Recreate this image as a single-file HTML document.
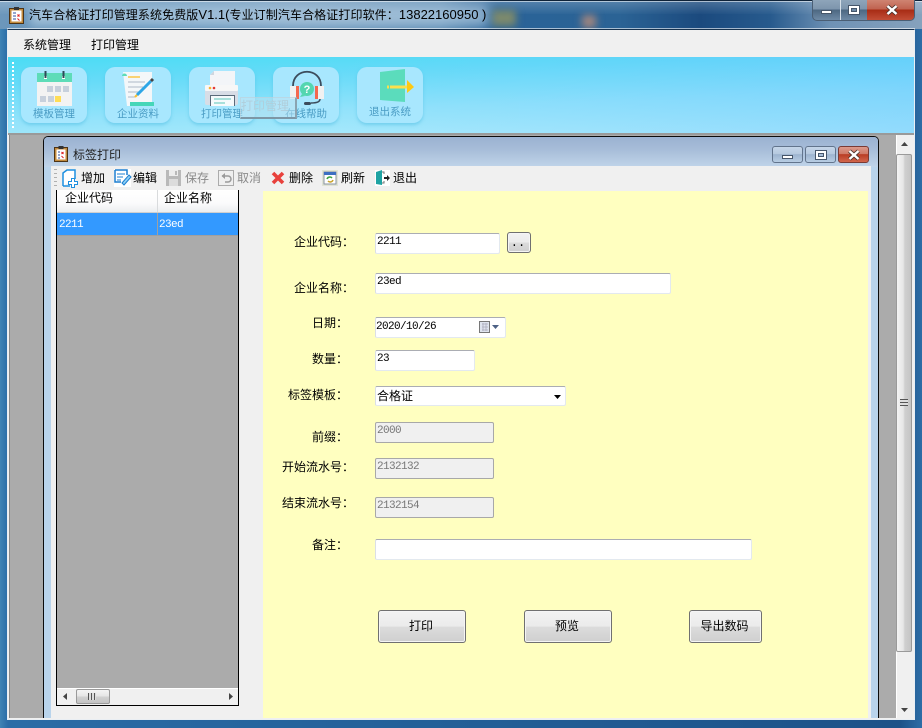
<!DOCTYPE html>
<html lang="zh"><head><meta charset="utf-8"><title>标签打印</title>
<style>
html,body{margin:0;padding:0;width:922px;height:728px;overflow:hidden;background:#1d5288}
*{box-sizing:border-box}
body{position:relative;font:12px "Liberation Sans","Noto Sans CJK SC",sans-serif;color:#000}
.a,.t,.i,.b{position:absolute}
.t{white-space:nowrap;line-height:16px;height:16px}
.m{font-family:"Liberation Mono",monospace;font-size:11px;letter-spacing:-.6px}
.i{background:#fff;border:1px solid #e3e9ef;border-top-color:#abadb3;border-left-color:#dbdfe6;border-radius:2px;font:11px/16px "Liberation Mono",monospace;letter-spacing:-.6px;padding:0 0 0 1px;color:#000}
.d{background:#f0f0f0;border:1px solid #a8a8a8;color:#777}
.b{background:linear-gradient(#f2f2f2 0,#ebebeb 50%,#dcdcdc 51%,#cfcfcf 100%);border:1px solid #707070;border-radius:3px;box-shadow:inset 0 0 0 1px #f5f5f5;text-align:center;font-size:12px;line-height:31px;padding-right:2px}
.card{position:absolute;top:67px;width:66px;height:56px;border-radius:10px;background:#a8e7fe;box-shadow:0 2px 3px rgba(80,190,225,.55)}
.cl{position:absolute;top:107px;width:66px;text-align:center;color:#4a9cc4;font-size:10.500px;line-height:14px;white-space:nowrap}
svg{position:absolute;overflow:visible}
.l{font-size:13px}
</style></head><body>
<!-- outer frame -->
<div class="a" style="left:0;top:0;width:922px;height:728px;background:linear-gradient(90deg,#3f83b5 0,#2a6ca6 8px,#1d5288 900px,#2d6da6 922px)"></div>
<!-- title glass -->
<div class="a" style="left:0;top:0;width:922px;height:29px;border-top:1px solid #0e2238;background:linear-gradient(90deg,#6c97bb 0,#5d8fb8 130px,#6d97bb 300px,#5c8bb3 440px,#2a6398 500px,#2b6395 620px,#1b4a7e 700px,#275a8d 770px,#6f92b5 830px,#86a2bd 922px)"></div>
<div class="a" style="left:0;top:1px;width:922px;height:13px;background:linear-gradient(rgba(255,255,255,.2),rgba(255,255,255,.02))"></div>
<div class="a" style="left:492px;top:10px;width:24px;height:16px;background:#7d8a6c;filter:blur(4px)"></div>
<div class="a" style="left:582px;top:15px;width:14px;height:13px;background:#a0857f;filter:blur(4px)"></div>
<div class="a" style="left:30px;top:6px;width:458px;height:20px;background:rgba(205,225,240,.55);filter:blur(5px)"></div>
<div class="a" style="left:0;top:1px;width:922px;height:1px;background:rgba(255,255,255,.55)"></div>
<div class="a" style="left:7px;top:28px;width:908px;height:1px;background:rgba(255,255,255,.6)"></div>
<!-- app icon -->
<svg style="left:9px;top:7px" width="15" height="17" viewBox="0 0 15 17"><rect x=".5" y="1.500" width="14" height="15" fill="#c28a3c" stroke="#4d3416"/><rect x="2.500" y="3.500" width="10" height="11" fill="#fff"/><rect x="5" y="0" width="5" height="3" fill="#333"/><path d="M4 6h3M4 9h3M4 12h3" stroke="#2c4f9e"/><path d="M8.500 7.500l2 2M10.500 7.500l-2 2M8.500 11.500l2 2" stroke="#d22"/></svg>
<div class="t" style="left:29px;top:7px;color:#000;letter-spacing:.1px">汽车合格证打印管理系统免费版<span class="l" style="letter-spacing:0">V1.1(</span>专业订制汽车合格证打印软件：<span class="l" style="letter-spacing:0">13822160950 )</span></div>
<!-- main window buttons -->
<div class="a" style="left:812px;top:0;width:103px;height:21px;border:1px solid #4a5e74;border-top:0;border-radius:0 0 5px 5px;overflow:hidden;background:linear-gradient(#8ea5ba 0,#7d95ad 45%,#4d6882 50%,#6e8aa6 100%)">
  <div class="a" style="left:27px;top:0;width:1px;height:20px;background:#d5dfe8"></div>
  <div class="a" style="left:54px;top:0;width:47px;height:20px;background:linear-gradient(#cf8472 0,#c06350 45%,#a82c15 50%,#c24e37 100%)"></div>
  <div class="a" style="left:8px;top:10px;width:11px;height:4px;background:#fff;border:1px solid #46566a"></div>
  <div class="a" style="left:35px;top:5px;width:12px;height:10px;background:#fff;border:1px solid #46566a"></div>
  <div class="a" style="left:38px;top:8px;width:6px;height:4px;background:#6e8aa6;border:1px solid #46566a"></div>
  <svg style="left:73px;top:5px" width="12" height="10" viewBox="0 0 12 10"><path d="M1.500 1l9 8M10.500 1l-9 8" stroke="#46302a" stroke-width="4"/><path d="M1.500 1l9 8M10.500 1l-9 8" stroke="#fff" stroke-width="2.400"/></svg>
</div>
<!-- client -->
<div class="a" style="left:7px;top:29px;width:908px;height:691px;background:#f0f0f0;border:1px solid #e9eef3;border-top:1px solid #17324e"></div>
<!-- menu -->
<div class="t" style="left:23px;top:37px">系统管理</div>
<div class="t" style="left:91px;top:37px">打印管理</div>
<!-- banner -->
<div class="a" style="left:8px;top:57px;width:906px;height:78px;border-bottom:2px solid #9a9a9a;background:linear-gradient(90deg,rgba(90,190,255,0) 0,rgba(90,190,255,0) 35%,rgba(90,190,255,.38) 100%),linear-gradient(178deg,#4adcf4 0,#66dbf8 25%,#93e3fb 60%,#b5edfc 100%)"></div>
<div class="a" style="left:12px;top:62px;width:2px;height:66px;border-left:2px dotted #fff"></div>
<div class="card" style="left:21px"></div><div class="card" style="left:105px"></div><div class="card" style="left:189px"></div><div class="card" style="left:273px"></div><div class="card" style="left:357px"></div>
<!-- calendar -->
<svg style="left:37px;top:71px" width="35" height="35" viewBox="0 0 35 35"><rect y="11" width="35" height="24" fill="#f3f3f3"/><rect y="2" width="35" height="9" fill="#5edcb8"/><rect x="7" y="5" width="3" height="3" fill="#fff"/><rect x="25" y="5" width="3" height="3" fill="#fff"/><rect x="7.500" y="0" width="2" height="7" fill="#2f4858"/><rect x="25.500" y="0" width="2" height="7" fill="#2f4858"/><g fill="#c7d0dc"><rect x="10" y="15" width="6" height="6"/><rect x="18" y="15" width="6" height="6"/><rect x="26" y="15" width="6" height="6"/><rect x="3" y="25" width="6" height="6"/><rect x="11" y="25" width="6" height="6"/></g><rect x="18" y="25" width="6" height="6" fill="#ffdd57"/></svg>
<!-- document -->
<svg style="left:120px;top:71px" width="36" height="35" viewBox="0 0 36 35"><path d="M3 1h29v34H7z" fill="#f4f7f9"/><path d="M2 5a2.500 2.500 0 1 1 5 0z" fill="#5edcb8"/><rect x="10" y="31" width="24" height="4" fill="#45d6b8"/><path d="M8 6h12" stroke="#fcc33c" stroke-width="1.400"/><path d="M8 11h17M8 16h15M8 21h12M8 26h7" stroke="#bcc6d2" stroke-width="1.300"/><path d="M17 24L31 10" stroke="#2ea6e6" stroke-width="3"/><path d="M31 10l2-2" stroke="#444" stroke-width="3"/><path d="M17 24l-2 2" stroke="#fbc02d" stroke-width="2"/></svg>
<!-- printer -->
<svg style="left:205px;top:71px" width="35" height="36" viewBox="0 0 35 36"><path d="M9 0h21v14H5V4z" fill="#f3f5f8"/><path d="M5 4h4V0z" fill="#cfd6df"/><rect y="14" width="33" height="20" rx="2" fill="#d8dde6"/><rect y="14" width="33" height="6" rx="1" fill="#f7f7f7"/><circle cx="5" cy="17" r="1.300" fill="#f9b233"/><circle cx="9" cy="17" r="1.300" fill="#e53935"/><rect x="5" y="24" width="25" height="11" fill="#5b6b7b"/><rect x="6" y="25" width="23" height="10" fill="#f5fafc"/><path d="M9 28h17" stroke="#8fd8d0" stroke-width="1.500"/><path d="M9 32h11" stroke="#8fd8d0" stroke-width="1.500"/></svg>
<!-- headset -->
<svg style="left:289px;top:71px" width="36" height="35" viewBox="0 0 36 35"><path d="M4 15C4 -4 32 -4 32 15" fill="none" stroke="#3c4c5c" stroke-width="1.800"/><rect x="1" y="15" width="7" height="13" fill="#f1f1f1"/><rect x="28" y="15" width="7" height="13" fill="#f1f1f1"/><rect x="7" y="15" width="3" height="13" fill="#f4684f"/><rect x="26" y="15" width="3" height="13" fill="#f4684f"/><circle cx="18" cy="18" r="7" fill="#54d6b0"/><path d="M13 23l-2 3 5-1z" fill="#54d6b0"/><text x="18" y="22" font-size="11" font-weight="bold" text-anchor="middle" fill="#fff" font-family="Liberation Sans">?</text><path d="M31 28c0 3-4 4-9 4" fill="none" stroke="#3c4c5c" stroke-width="1.500"/><rect x="15" y="31" width="7" height="3" rx="1.500" fill="#3c4c5c"/></svg>
<!-- exit -->
<svg style="left:380px;top:69px" width="35" height="36" viewBox="0 0 35 36"><path d="M0 3L25 0v33L0 31z" fill="#5bdcbc"/><path d="M7 18h21" stroke="#fbe04a" stroke-width="3" stroke-dasharray="2 1 22 0"/><path d="M27 11l7 7-7 6z" fill="#fdc913"/></svg>
<div class="cl" style="left:21px">模板管理</div>
<div class="cl" style="left:105px">企业资料</div>
<div class="cl" style="left:189px">打印管理</div>
<div class="cl" style="left:273px">在线帮助</div>
<div class="cl" style="left:357px;top:105px">退出系统</div>
<!-- drag ghost -->
<div class="a" style="left:240px;top:97px;width:57px;height:22px;background:rgba(190,225,240,.5);border:1px solid rgba(190,205,215,.5);border-right:2px solid #8aa3b1;border-bottom:2px solid #7d97a6;font-size:12px;line-height:17px;text-align:left;color:#b0cedb;white-space:nowrap">打印管理</div>
<!-- MDI area -->
<div class="a" style="left:9px;top:135px;width:887px;height:583px;background:#ababab;border-left:1px solid #8a8a8a"></div>
<!-- MDI scrollbar -->
<div class="a" style="left:896px;top:135px;width:17px;height:583px;background:#f0f0f0;border-left:1px solid #fff"></div>
<svg style="left:900px;top:141px" width="9" height="6"><path d="M4.500 1L8 5H1z" fill="#444"/></svg>
<svg style="left:900px;top:707px" width="9" height="6"><path d="M1 1h7L4.500 5z" fill="#444"/></svg>
<div class="a" style="left:896px;top:154px;width:16px;height:498px;border:1px solid #9a9a9a;border-radius:2px;background:linear-gradient(90deg,#f4f4f4 0,#e6e6e6 45%,#d0d0d0 55%,#c4c4c4 100%)"></div>
<div class="a" style="left:900px;top:399px;width:8px;height:7px;background:repeating-linear-gradient(#555 0,#555 1px,#ddd 1px,#ddd 3px)"></div>
<!-- child window -->
<div class="a" style="left:43px;top:136px;width:836px;height:582px;border:1px solid #0c0c0c;border-bottom:0;border-radius:5px 5px 0 0;background:#b9d4ec;overflow:hidden">
 <div class="a" style="left:0;top:0;width:834px;height:30px;background:linear-gradient(#9bb2d1 0,#a6bcd8 40%,#c0d4e9 100%)"></div>
</div>
<svg style="left:54px;top:146px" width="14" height="16" viewBox="0 0 14 16"><rect x=".5" y="1.500" width="13" height="14" fill="#c28a3c" stroke="#4d3416"/><rect x="2.500" y="3.500" width="9" height="10" fill="#fff"/><rect x="4.500" y="0" width="5" height="3" fill="#333"/><path d="M4 6h2M4 9h2M4 12h2" stroke="#2c4f9e"/><path d="M7.500 6l2 2M9.500 6l-2 2M7.500 10l2 2" stroke="#d22"/></svg>
<div class="t" style="left:73px;top:147px;color:#222">标签打印</div>
<!-- child buttons -->
<div class="a" style="left:772px;top:146px;width:31px;height:17px;border:1px solid #62748c;border-radius:3px;background:linear-gradient(#c5d6e9 0,#b6c9df 45%,#9db4cf 50%,#b8cde3 100%)"><div class="a" style="left:9px;top:8px;width:11px;height:4px;background:#fff;border:1px solid #46566a"></div></div>
<div class="a" style="left:805px;top:146px;width:31px;height:17px;border:1px solid #62748c;border-radius:3px;background:linear-gradient(#c5d6e9 0,#b6c9df 45%,#9db4cf 50%,#b8cde3 100%)"><div class="a" style="left:9px;top:3px;width:12px;height:10px;background:#fff;border:1px solid #46566a"></div><div class="a" style="left:12px;top:6px;width:6px;height:4px;background:#a9bfd8;border:1px solid #46566a"></div></div>
<div class="a" style="left:838px;top:146px;width:31px;height:17px;border:1px solid #7a3a34;border-radius:3px;background:linear-gradient(#dc9a8c 0,#cf7a68 45%,#b93c24 50%,#d2664c 100%)"><svg style="left:9px;top:3px" width="12" height="10" viewBox="0 0 12 10"><path d="M1.500 1l9 8M10.500 1l-9 8" stroke="#46302a" stroke-width="4"/><path d="M1.500 1l9 8M10.500 1l-9 8" stroke="#fff" stroke-width="2.400"/></svg></div>
<!-- child client -->
<div class="a" style="left:51px;top:166px;width:820px;height:552px;background:#f0f0f0"></div>
<div class="a" style="left:263px;top:191px;width:605px;height:527px;background:#ffffc0"></div>
<!-- toolbar -->
<div class="a" style="left:54px;top:169px;width:3px;height:18px;background:repeating-linear-gradient(#b0b0b0 0,#b0b0b0 1px,transparent 1px,transparent 4px)"></div>
<svg style="left:61px;top:169px" width="18" height="19" viewBox="0 0 18 19"><path d="M2 17V4l4-3h8v9M2 17h7" fill="#fff" stroke="#1d8fe0" stroke-width="1.500"/><rect x="10" y="9" width="4" height="10" fill="#1d8fe0"/><rect x="7" y="12" width="10" height="4" fill="#1d8fe0"/><rect x="11" y="10" width="2" height="8" fill="#fff"/><rect x="8" y="13" width="8" height="2" fill="#fff"/></svg>
<div class="t" style="left:81px;top:170px">增加</div>
<svg style="left:114px;top:169px" width="17" height="18" viewBox="0 0 17 18"><rect x="0" y="0" width="17" height="18" fill="#fff"/><path d="M1 1h12v5M1 1v12h6" fill="none" stroke="#1d7fd0" stroke-width="1.500"/><path d="M3 5h8M3 8h6M3 11h4" stroke="#1d7fd0"/><path d="M8 14L15 6l2 2-7 8z" fill="#8fd0f5" stroke="#1d7fd0"/></svg>
<div class="t" style="left:133px;top:170px">编辑</div>
<svg style="left:166px;top:170px" width="15" height="16" viewBox="0 0 15 16"><rect width="15" height="16" fill="#b9b9b9"/><rect x="3" y="0" width="9" height="6" fill="#ededed"/><rect x="3" y="9" width="9" height="7" fill="#dcdcdc"/><rect x="9" y="1" width="2" height="4" fill="#b9b9b9"/></svg>
<div class="t" style="left:185px;top:170px;color:#8a8a8a">保存</div>
<svg style="left:218px;top:170px" width="16" height="16" viewBox="0 0 16 16"><rect x=".5" y=".5" width="15" height="15" fill="#efefef" stroke="#ababab"/><path d="M4 6h6a3 3 0 0 1 0 6H7" fill="none" stroke="#9a9a9a" stroke-width="1.500"/><path d="M7 3v6L3.500 6z" fill="#9a9a9a"/></svg>
<div class="t" style="left:237px;top:170px;color:#8a8a8a">取消</div>
<svg style="left:271px;top:171px" width="14" height="14" viewBox="0 0 14 14"><path d="M2 2l10 10M12 2L2 12" stroke="#e8413c" stroke-width="3.600"/></svg>
<div class="t" style="left:289px;top:170px">删除</div>
<svg style="left:322px;top:170px" width="16" height="16" viewBox="0 0 16 16"><rect width="16" height="16" fill="#dfe3d5"/><rect x="2" y="2" width="12" height="12" fill="#fff" stroke="#8a93a0"/><rect x="2" y="2" width="12" height="3" fill="#3d6fc2"/><path d="M5 9a3 3 0 0 1 5-1" fill="none" stroke="#3da23d" stroke-width="1.500"/><path d="M11 10a3 3 0 0 1-5 1" fill="none" stroke="#c9a32d" stroke-width="1.500"/></svg>
<div class="t" style="left:341px;top:170px">刷新</div>
<svg style="left:375px;top:170px" width="15" height="16" viewBox="0 0 15 16"><rect width="15" height="16" fill="#fff"/><path d="M1 2l6-2v15l-6-1z" fill="#1fa3a3"/><path d="M7 2h2v2M7 13h2v-2" stroke="#777" fill="none"/><path d="M9 7h3V5l3 3-3 3V9H9z" fill="#222"/></svg>
<div class="t" style="left:393px;top:170px">退出</div>
<!-- left grid -->
<div class="a" style="left:56px;top:190px;width:183px;height:516px;border:1px solid #000;border-top:0;background:#ababab"></div>
<div class="a" style="left:57px;top:190px;width:181px;height:23px;background:linear-gradient(#fff 0,#fbfbfc 60%,#eceef0 100%);border-bottom:1px solid #cfcfcf"></div>
<div class="a" style="left:157px;top:190px;width:1px;height:22px;background:#d9dbdd"></div>
<div class="t" style="left:65px;top:190px">企业代码</div>
<div class="t" style="left:164px;top:190px">企业名称</div>
<div class="a" style="left:57px;top:213px;width:181px;height:23px;background:#3399ff;border-bottom:1px solid #a0a0a0"></div>
<div class="a" style="left:157px;top:213px;width:1px;height:23px;background:#a0a0a0"></div>
<div class="t m" style="left:59px;top:217px;color:#fff">2211</div>
<div class="t m" style="left:159px;top:217px;color:#fff">23ed</div>
<!-- grid scrollbar -->
<div class="a" style="left:57px;top:688px;width:181px;height:17px;background:#f0f0f0;border-top:1px solid #fff"></div>
<svg style="left:62px;top:692px" width="6" height="9"><path d="M5 1v7L1 4.500z" fill="#444"/></svg>
<svg style="left:228px;top:692px" width="6" height="9"><path d="M1 1v7l4-3.500z" fill="#444"/></svg>
<div class="a" style="left:76px;top:689px;width:34px;height:15px;border:1px solid #9a9a9a;border-radius:2px;background:linear-gradient(#f4f4f4 0,#e6e6e6 45%,#d0d0d0 55%,#c4c4c4 100%)"></div>
<div class="a" style="left:88px;top:693px;width:8px;height:7px;background:repeating-linear-gradient(90deg,#555 0,#555 1px,#ddd 1px,#ddd 3px)"></div>
<!-- form -->
<div class="t" style="left:294px;top:234px">企业代码：</div>
<div class="t" style="left:294px;top:280px">企业名称：</div>
<div class="t" style="left:312px;top:315px">日期：</div>
<div class="t" style="left:312px;top:351px">数量：</div>
<div class="t" style="left:288px;top:387px">标签模板：</div>
<div class="t" style="left:312px;top:429px">前缀：</div>
<div class="t" style="left:282px;top:459px">开始流水号：</div>
<div class="t" style="left:282px;top:495px">结束流水号：</div>
<div class="t" style="left:312px;top:537px">备注：</div>
<div class="i" style="left:375px;top:233px;width:125px;height:21px">2211</div>
<div class="b" style="left:507px;top:232px;width:24px;height:21px;line-height:20px;font-family:'Liberation Mono',monospace">..</div>
<div class="i" style="left:375px;top:273px;width:296px;height:21px">23ed</div>
<div class="i" style="left:375px;top:317px;width:131px;height:21px;padding-top:1px;padding-left:0">2020/10/26</div>
<svg style="left:479px;top:321px" width="23" height="13" viewBox="0 0 23 13"><rect x=".5" y=".5" width="10" height="11" fill="#dfe4ee" stroke="#777"/><path d="M3 3h6M3 6h6M3 9h6M4 2v8M7 2v8" stroke="#aab" stroke-width=".8"/><path d="M13 4h7l-3.500 4z" fill="#4d6185"/></svg>
<div class="i" style="left:375px;top:350px;width:100px;height:21px">23</div>
<div class="i" style="left:375px;top:386px;width:191px;height:20px;letter-spacing:0;padding-top:1px;font:12px/16px 'Liberation Sans','Noto Sans CJK SC',sans-serif">合格证</div>
<svg style="left:553px;top:394px" width="9" height="6"><path d="M1 1h7L4.500 5z" fill="#000"/></svg>
<div class="i d" style="left:375px;top:422px;width:119px;height:21px;color:#777">2000</div>
<div class="i d" style="left:375px;top:458px;width:119px;height:21px;color:#777">2132132</div>
<div class="i d" style="left:375px;top:497px;width:119px;height:21px;color:#777">2132154</div>
<div class="i" style="left:375px;top:539px;width:377px;height:21px"></div>
<div class="b" style="left:378px;top:610px;width:88px;height:33px">打印</div>
<div class="b" style="left:524px;top:610px;width:88px;height:33px">预览</div>
<div class="b" style="left:689px;top:610px;width:73px;height:33px">导出数码</div>
</body></html>
